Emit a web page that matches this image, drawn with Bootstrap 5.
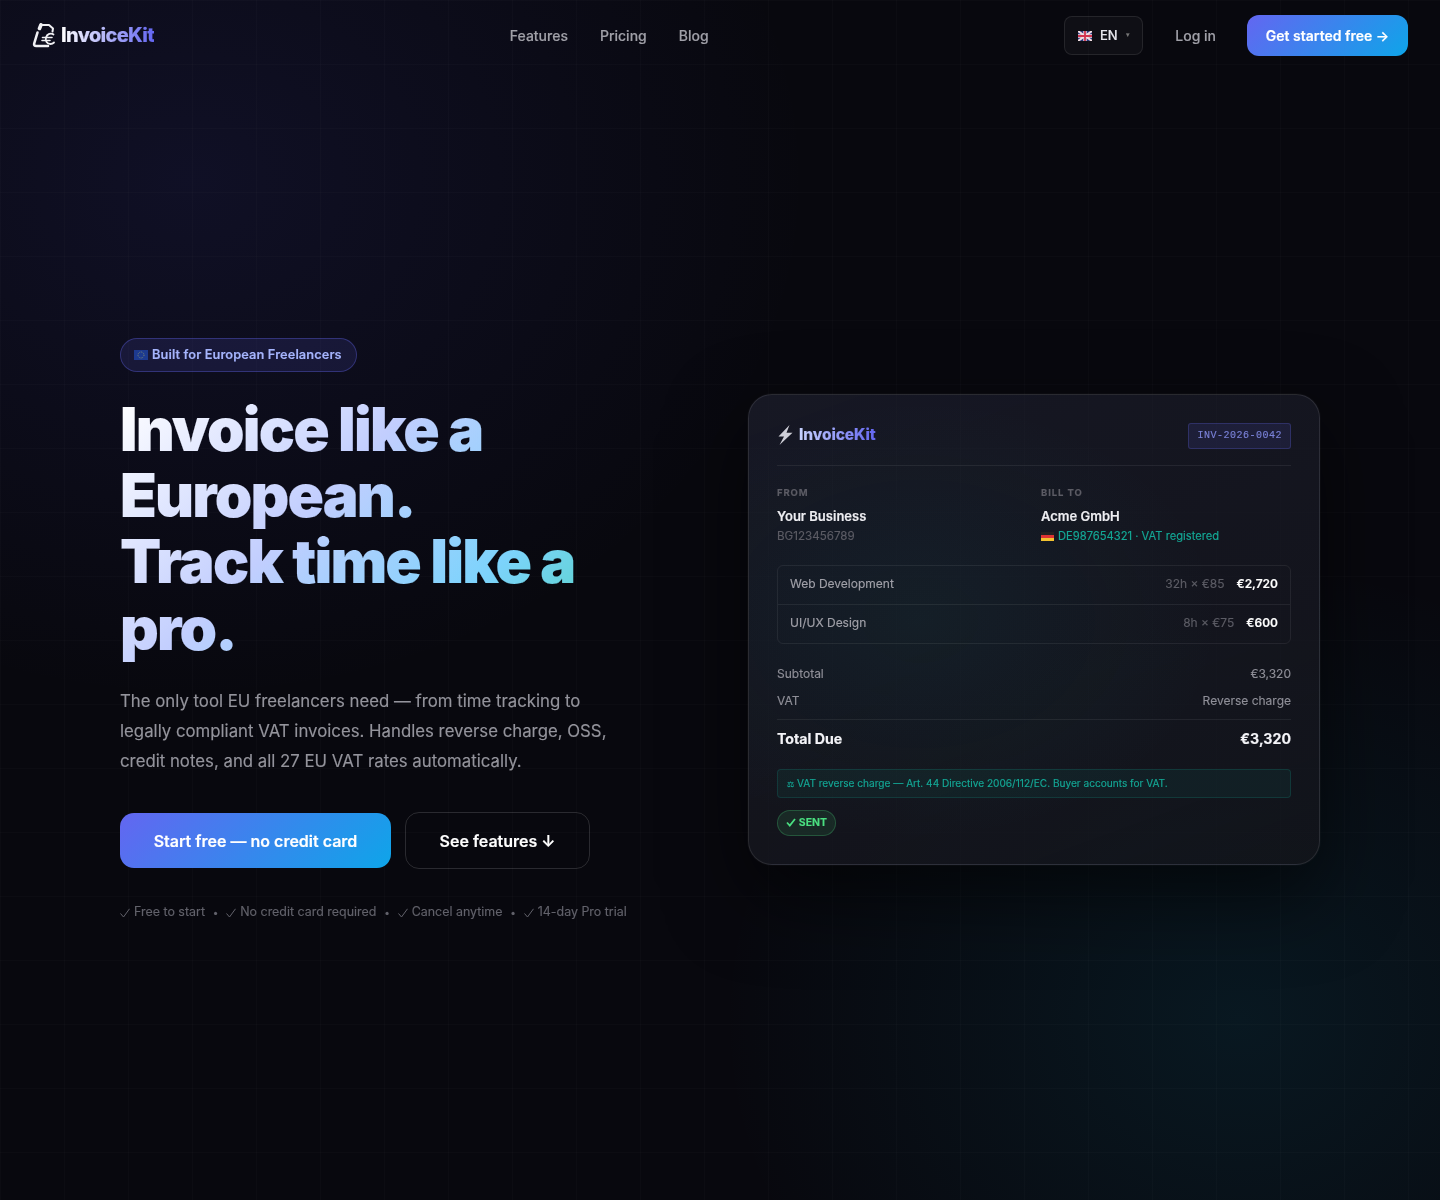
<!DOCTYPE html>
<html lang="en">
<head>
  <meta charset="UTF-8" />
  <meta name="viewport" content="width=device-width, initial-scale=1" />
  <title>InvoiceKit</title>
  <link href="https://cdn.jsdelivr.net/npm/bootstrap@5.3.1/dist/css/bootstrap.min.css" rel="stylesheet" />
  <style>
    body {
      font-family: Inter, "Liberation Sans", sans-serif;
      background-color: #08080e;
      color: #fff;
      min-height: 1200px;
      -webkit-text-stroke: .15px;
    }
    .page-bg {
      min-height: 1200px;
      background-image:
        linear-gradient(rgba(255,255,255,.016) 1px, transparent 1px),
        linear-gradient(90deg, rgba(255,255,255,.016) 1px, transparent 1px),
        radial-gradient(ellipse 620px 520px at 190px 180px, rgba(80,80,230,.11), transparent 100%),
        radial-gradient(ellipse 520px 460px at 1240px 1020px, rgba(14,165,200,.1), transparent 100%);
      background-size: 64px 64px, 64px 64px, auto, auto;
    }
    .top-bar { height: 71px; padding: 0 32px; transform: translateZ(0); }
    .brand-text {
      font-size: 20px; font-weight: 800; letter-spacing: -.7px; margin-bottom: 2px;
      background: linear-gradient(90deg, #fff, #6366f1);
      -webkit-background-clip: text; background-clip: text; color: transparent;
    }
    .top-links { gap: 32px; }
    .top-links a { color: #a0a0a8; font-size: 14px; font-weight: 500; text-decoration: none; }
    .lang-btn {
      height: 39px; width: 79px; border: 1px solid rgba(255,255,255,.09); border-radius: 8px;
      background: rgba(255,255,255,.03); color: #e8e8ee; font-size: 13px; font-weight: 500;
    }
    .lang-caret { font-size: 7px; color: #777; }
    .login-link { color: #a0a0a8; font-size: 14px; font-weight: 500; text-decoration: none; margin: 0 31px 0 32px; }
    .cta-small {
      height: 41px; width: 161px; border-radius: 12px; border: 0; color: #fff; font-size: 14px; font-weight: 600;
      background: linear-gradient(135deg, #6366f1, #0ea5e9);
    }
    .hero-wrap {
      display: grid; grid-template-columns: 1fr 1fr; gap: 56px; width: 1200px; margin: 0 auto; padding-top: 267px;
      transform: translateZ(0);
    }
    .hero-pill {
      height: 34px; width: 237px; padding-left: 13px; border-radius: 17px; border: 1px solid rgba(99,102,241,.35);
      background: rgba(99,102,241,.13); color: #a5b4fc; font-size: 12.8px; font-weight: 600; letter-spacing: .1px;
    }
    .hero-title {
      font-size: 60.15px; font-weight: 900; letter-spacing: -.03em; line-height: 1.1; margin: 25px 0 24px;
      background: linear-gradient(135deg, #fff 0%, #c2cefe 36%, #7dd3fc 65%, #34d399 100%);
      -webkit-background-clip: text; background-clip: text; color: transparent;
    }
    .hero-sub { color: #94949c; font-size: 16.8px; line-height: 1.8; max-width: 500px; margin-bottom: 36px; }
    .cta-row { gap: 14px; }
    .cta-main {
      height: 55px; width: 271px; border: 0; padding-top: 2px; border-radius: 14px; color: #fff; font-size: 16px; font-weight: 600;
      background: linear-gradient(135deg, #6366f1, #0ea5e9);
    }
    .cta-ghost {
      height: 57px; width: 185px; padding-top: 2px; background: transparent; border: 1px solid rgba(255,255,255,.14); border-radius: 14px;
      color: #fff; font-size: 16px; font-weight: 600;
    }
    .perk-row { color: #62626b; font-size: 12.45px; margin-top: 34px; }
    .perk-item { display: inline-flex; align-items: center; gap: 4px; }
    .perk-dot { margin: 0 7.8px; font-size: 10px; }
    .invoice-panel {
      align-self: start; margin-top: 56px; height: 471px; padding: 28px; border-radius: 24px;
      border: 1px solid rgba(255,255,255,.1);
      background:
        radial-gradient(ellipse 300px 220px at 30% 48%, rgba(20,150,150,.07), transparent 100%),
        linear-gradient(160deg, rgba(32,34,50,.62), rgba(20,21,27,.78));
      box-shadow: 0 0 0 1px rgba(255,255,255,.02), 0 30px 80px rgba(0,0,0,.6);
      filter: blur(.45px);
    }
    .panel-head { padding-bottom: 14px; border-bottom: 1px solid rgba(255,255,255,.07); margin-bottom: 20px; height: 43px; }
    .panel-brand-box { height: 24px; gap: 5px; }
    .panel-brand { font-size: 15.5px; font-weight: 800; letter-spacing: -.1px; background: linear-gradient(90deg,#c7d2fe,#6366f1); -webkit-background-clip: text; background-clip: text; color: transparent; }
    .inv-tag { font-family: "Liberation Mono", monospace; font-size: 10px; letter-spacing: .5px; line-height: 24px; height: 26px; color: #7a82d8; padding: 0 8px; border: 1px solid rgba(99,102,241,.25); background: rgba(99,102,241,.12); border-radius: 3px; }
    .party-grid { display: grid; grid-template-columns: 1fr 1fr; gap: 14px; }
    .lbl { font-size: 9.5px; font-weight: 700; letter-spacing: .9px; color: #5c5c65; margin-bottom: 7px; }
    .party { font-size: 13px; font-weight: 600; color: #eeeef2; margin-bottom: 1px; }
    .party-sub { font-size: 11.6px; color: #5c5c65; }
    .party-vat { font-size: 11.2px; color: #14a896; }
    .line-box { border: 1px solid rgba(255,255,255,.07); border-radius: 6px; margin-top: 20px; margin-bottom: 16px; }
    .line-row { height: 38px; padding: 0 12px 3px; font-size: 12px; color: #a0a0a8; }
    .line-row + .line-row { height: 39px; border-top: 1px solid rgba(255,255,255,.07); }
    .line-qty { color: #5c5c65; margin-right: 12px; }
    .line-amt { color: #fff; font-weight: 600; }
    .sum-row { font-size: 12px; color: #8f8f98; height: 27px; }
    .total-row { border-top: 1px solid rgba(255,255,255,.07); height: 41px; padding-bottom: 2px; font-size: 14.2px; font-weight: 700; color: #f4f4f8; margin-top: 5px; }
    .vat-note { height: 29px; margin-top: 9px; padding: 0 9px; font-size: 10.1px; color: #14a896; border: 1px solid rgba(20,160,143,.2); background: rgba(20,160,143,.08); border-radius: 4px; }
    .vat-icon { font-size: 8px; margin-right: 3px; }
    .sent-tag { margin-top: 12px; height: 26px; width: 59px; gap: 3px; padding-bottom: 1px; border-radius: 13px; font-size: 10.5px; font-weight: 700; color: #4ade80; border: 1px solid rgba(74,222,128,.25); background: rgba(74,222,128,.1); }
  </style>
</head>
<body>
  <div class="page-bg">
    <!-- Top navigation -->
    <nav class="top-bar d-flex align-items-center justify-content-between">
      <div class="d-flex align-items-center gap-1">
        <svg width="25" height="25" viewBox="0 0 25 25" fill="none" stroke="#f0f0f4" stroke-width="2" stroke-linecap="round" stroke-linejoin="round">
          <path d="M9 2h8l4 3.500-.5 3" />
          <path d="M9 1.800 7.500 5.500" stroke-width="3.600" />
          <path d="M5.500 9.500 2.200 20.500c-.4 1.600.5 2.500 2 2.500H16" stroke-width="2.600" />
          <path d="M21.500 11.500c-2.500-2-6.500-.5-7.500 3-1 3.500 1 6.500 4.500 6.500 1.500 0 2.500-.5 3.500-1.500" stroke-width="1.800" />
          <path d="M10.500 14.500H20M10 17.500h8" stroke-width="1.600" />
        </svg>
        <span class="brand-text">InvoiceKit</span>
      </div>
      <div class="top-links d-flex align-items-center">
        <a href="#">Features</a>
        <a href="#">Pricing</a>
        <a href="#">Blog</a>
      </div>
      <div class="d-flex align-items-center">
        <button class="lang-btn d-flex align-items-center justify-content-center gap-2 p-0">
          <svg width="14" height="10" viewBox="0 0 14 10"><rect width="14" height="10" fill="#2b3a7e"/><path d="M0 0l14 10M14 0L0 10" stroke="#f3dfe3" stroke-width="2"/><path d="M7 0v10M0 5h14" stroke="#f3dfe3" stroke-width="3.400"/><path d="M7 0v10M0 5h14" stroke="#d1344f" stroke-width="1.800"/></svg>
          <span>EN</span><span class="lang-caret">▾</span>
        </button>
        <a class="login-link" href="#">Log in</a>
        <button class="cta-small">Get started free →</button>
      </div>
    </nav>

    <!-- Hero -->
    <section class="hero-wrap">
      <div>
        <div class="hero-pill d-inline-flex align-items-center gap-1">
          <svg width="14" height="10" viewBox="0 0 14 10"><rect width="14" height="10" fill="#1d3a8f"/><circle cx="7" cy="5" r="3" fill="none" stroke="#7f8a70" stroke-width="1" stroke-dasharray="1 1"/></svg>
          <span>Built for European Freelancers</span>
        </div>
        <h1 class="hero-title">Invoice like a European.<br>Track time like a pro.</h1>
        <p class="hero-sub">The only tool EU freelancers need — from time tracking to legally compliant VAT invoices. Handles reverse charge, OSS, credit notes, and all 27 EU VAT rates automatically.</p>
        <div class="cta-row d-flex align-items-center">
          <button class="cta-main">Start free — no credit card</button>
          <button class="cta-ghost">See features ↓</button>
        </div>
        <div class="perk-row d-flex align-items-center">
          <span class="perk-item"><svg width="10" height="10" viewBox="0 0 10 10" fill="none" stroke="#62626b" stroke-width="1"><path d="M.5 5.500 3.500 9 9.500 .8"/></svg>Free to start</span><span class="perk-dot">•</span>
          <span class="perk-item"><svg width="10" height="10" viewBox="0 0 10 10" fill="none" stroke="#62626b" stroke-width="1"><path d="M.5 5.500 3.500 9 9.500 .8"/></svg>No credit card required</span><span class="perk-dot">•</span>
          <span class="perk-item"><svg width="10" height="10" viewBox="0 0 10 10" fill="none" stroke="#62626b" stroke-width="1"><path d="M.5 5.500 3.500 9 9.500 .8"/></svg>Cancel anytime</span><span class="perk-dot">•</span>
          <span class="perk-item"><svg width="10" height="10" viewBox="0 0 10 10" fill="none" stroke="#62626b" stroke-width="1"><path d="M.5 5.500 3.500 9 9.500 .8"/></svg>14-day Pro trial</span>
        </div>
      </div>

      <div class="invoice-panel">
        <div class="panel-head d-flex align-items-start justify-content-between">
          <div class="panel-brand-box d-flex align-items-center">
            <svg width="17" height="20" viewBox="0 0 17 20"><path d="M12.500 0 1.500 11.500h5.500L2.500 20 15.500 7.800H9.500z" fill="#cfcfd8"/></svg>
            <span class="panel-brand">InvoiceKit</span>
          </div>
          <span class="inv-tag">INV-2026-0042</span>
        </div>
        <div class="party-grid">
          <div>
            <div class="lbl">FROM</div>
            <div class="party">Your Business</div>
            <div class="party-sub">BG123456789</div>
          </div>
          <div>
            <div class="lbl">BILL TO</div>
            <div class="party">Acme GmbH</div>
            <div class="party-vat d-flex align-items-center gap-1">
              <svg width="13" height="9" viewBox="0 0 13 9"><rect width="13" height="3" fill="#222"/><rect y="3" width="13" height="3" fill="#d33"/><rect y="6" width="13" height="3" fill="#f2c230"/></svg>
              <span>DE987654321 · VAT registered</span>
            </div>
          </div>
        </div>
        <div class="line-box">
          <div class="line-row d-flex align-items-center">
            <span class="me-auto">Web Development</span><span class="line-qty">32h × €85</span><span class="line-amt">€2,720</span>
          </div>
          <div class="line-row d-flex align-items-center">
            <span class="me-auto">UI/UX Design</span><span class="line-qty">8h × €75</span><span class="line-amt">€600</span>
          </div>
        </div>
        <div class="sum-row d-flex align-items-center justify-content-between"><span>Subtotal</span><span>€3,320</span></div>
        <div class="sum-row d-flex align-items-center justify-content-between"><span>VAT</span><span>Reverse charge</span></div>
        <div class="total-row d-flex align-items-center justify-content-between"><span>Total Due</span><span>€3,320</span></div>
        <div class="vat-note d-flex align-items-center"><span class="vat-icon">⚖</span>VAT reverse charge — Art. 44 Directive 2006/112/EC. Buyer accounts for VAT.</div>
        <div class="sent-tag d-flex align-items-center justify-content-center">
          <svg width="10" height="9" viewBox="0 0 10 9" fill="none" stroke="#4ade80" stroke-width="1.800"><path d="M1 4.500 3.800 7.500 9 1"/></svg>
          <span>SENT</span>
        </div>
      </div>
    </section>
  </div>
</body>
</html>
